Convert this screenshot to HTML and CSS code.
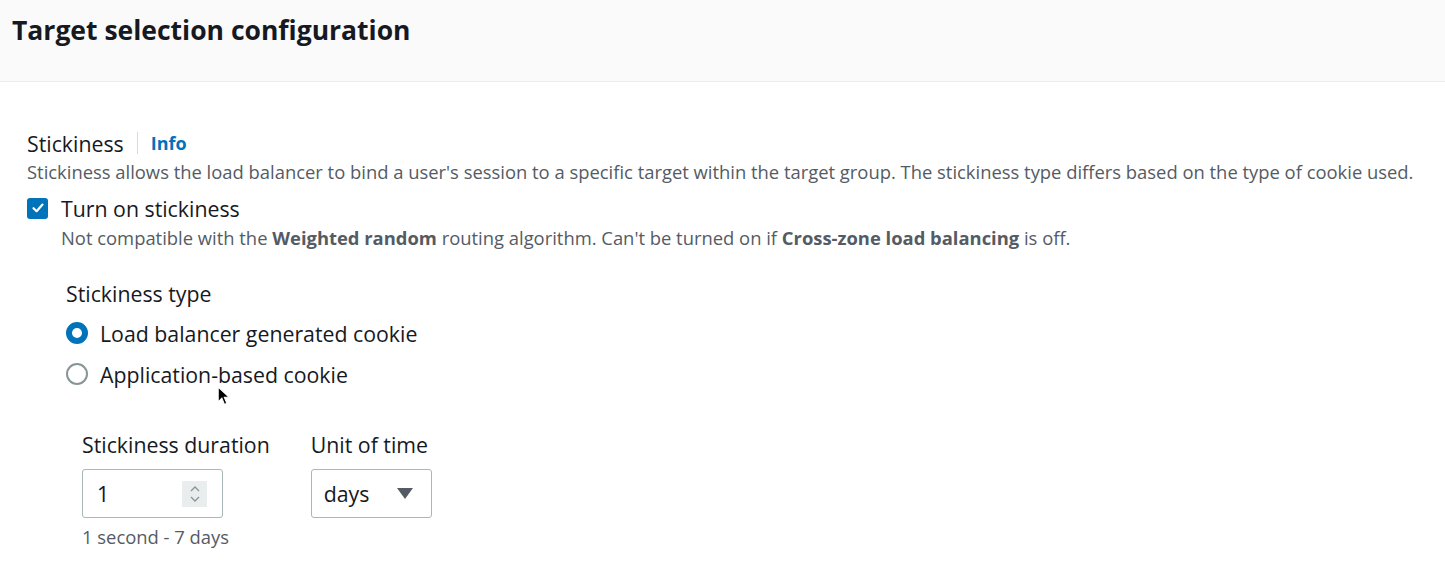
FILE: index.html
```html
<!DOCTYPE html>
<html>
<head>
<meta charset="utf-8">
<link rel="stylesheet" href="styles.css">
</head>
<body>
<div class="panel">
  <div class="header"><h2 class="title">Target selection configuration</h2></div>
  <div class="content">
    <div class="label-row">
      <span class="label">Stickiness</span>
      <span class="divider"></span>
      <a class="info">Info</a>
    </div>
    <div class="desc">Stickiness allows the load balancer to bind a user's session to a specific target within the target group. The stickiness type differs based on the type of cookie used.</div>
    <div class="check-row">
      <span class="checkbox">
        <svg width="14" height="14" viewBox="0 0 14 14"><path d="M2.5 7.2 L5.6 10.2 L11.5 3.6" fill="none" stroke="#fff" stroke-width="2.2" stroke-linecap="round" stroke-linejoin="round"/></svg>
      </span>
      <span class="check-label">Turn on stickiness</span>
    </div>
    <div class="check-desc">Not compatible with the <b>Weighted random</b> routing algorithm. Can't be turned on if <b>Cross-zone load balancing</b> is off.</div>
    <div class="sub">
      <div class="sub-label">Stickiness type</div>
      <div class="radio-row"><span class="radio on"></span><span class="radio-label">Load balancer generated cookie</span></div>
      <div class="radio-row"><span class="radio"></span><span class="radio-label">Application-based cookie</span></div>
      <div class="fields">
        <div class="field">
          <div class="field-label">Stickiness duration</div>
          <div class="input num">
            <span class="val">1</span>
            <span class="spinner">
              <svg width="14" height="22" viewBox="0 0 14 22"><path d="M3 8 L7 4 L11 8" fill="none" stroke="#879596" stroke-width="1.3"/><path d="M3 14 L7 18 L11 14" fill="none" stroke="#879596" stroke-width="1.3"/></svg>
            </span>
          </div>
          <div class="hint">1 second - 7 days</div>
        </div>
        <div class="field">
          <div class="field-label">Unit of time</div>
          <div class="input sel">
            <span class="val">days</span>
            <svg width="16" height="12" viewBox="0 0 16 12"><path d="M0 0 H16 L8 11 Z" fill="#545b64"/></svg>
          </div>
        </div>
      </div>
    </div>
  </div>
</div>
<svg class="cursor" width="15" height="21" viewBox="0 0 14 20"><path d="M1 1 L1 15 L4.5 11.5 L7 17.5 L9.2 16.5 L6.8 10.8 L11.5 10.8 Z" fill="#000" stroke="#fff" stroke-width="1"/></svg>
</body>
</html>
```
FILE: styles.css
```css
* { box-sizing: border-box; }
body {
  margin: 0;
  font-family: "Open Sans", "Noto Sans", sans-serif;
  color: #16191f;
  background: #fff;
  position: relative;
  width: 1445px;
  height: 572px;
  overflow: hidden;
}
.header {
  background: #fafafa;
  border-bottom: 1px solid #eaeded;
  height: 82px;
  padding: 12px 12px 0 12px;
}
.title {
  margin: 0;
  font-size: 26.5px;
  font-weight: 700;
  line-height: 36px;
}
.content {
  padding: 48px 27px 0 27px;
}
.label-row {
  display: flex;
  align-items: center;
  height: 26px;
}
.label { font-size: 21.3px; }
.divider {
  width: 1px;
  height: 22px;
  background: #d5dbdb;
  margin: 0 13px 0 13px;
}
.info {
  color: #0073bb;
  font-weight: 700;
  font-size: 18px;
}
.desc {
  color: #545b64;
  font-size: 18.4px;
  line-height: 26px;
  margin-top: 3px;
  white-space: nowrap;
}
.check-row {
  display: flex;
  align-items: center;
  margin-top: 10px;
  height: 26px;
}
.checkbox {
  width: 21px;
  height: 21px;
  background: #0073bb;
  border-radius: 3px;
  display: flex;
  align-items: center;
  justify-content: center;
}
.check-label {
  font-size: 21.3px;
  margin-left: 13px;
}
.check-desc {
  color: #545b64;
  font-size: 18.4px;
  line-height: 26px;
  margin-left: 34px;
  margin-top: 4px;
  white-space: nowrap;
}
.check-desc b { font-weight: 700; }
.sub {
  padding-left: 39px;
  margin-top: 30px;
}
.sub-label { font-size: 21.3px; line-height: 26px; }
.radio-row {
  display: flex;
  align-items: center;
  height: 26px;
  margin-top: 13px;
}
.radio-row + .radio-row { margin-top: 15px; }
.radio {
  width: 22px;
  height: 22px;
  border-radius: 50%;
  border: 2px solid #879596;
  background: #fff;
}
.radio.on { border: 6px solid #0073bb; }
.radio-label { font-size: 21.3px; margin-left: 12px; }
.fields {
  display: flex;
  gap: 41px;
  padding-left: 16px;
  margin-top: 45px;
}
.field-label { font-size: 21.3px; line-height: 26px; white-space: nowrap; }
.input {
  margin-top: 11px;
  height: 49px;
  border: 1px solid #aab7b8;
  border-radius: 3px;
  display: flex;
  align-items: center;
  font-size: 21.3px;
}
.num { width: 141px; padding-left: 14px; }
.num .val { flex: 1; }
.spinner {
  width: 25px;
  height: 26px;
  background: #eaeded;
  display: flex;
  align-items: center;
  justify-content: center;
  margin-right: 15px;
}
.sel { width: 121px; padding: 0 18px 0 12px; justify-content: space-between; }
.hint {
  color: #545b64;
  font-size: 18.4px;
  line-height: 26px;
  margin-top: 6px;
}
.cursor {
  position: absolute;
  left: 217px;
  top: 386px;
}
```
